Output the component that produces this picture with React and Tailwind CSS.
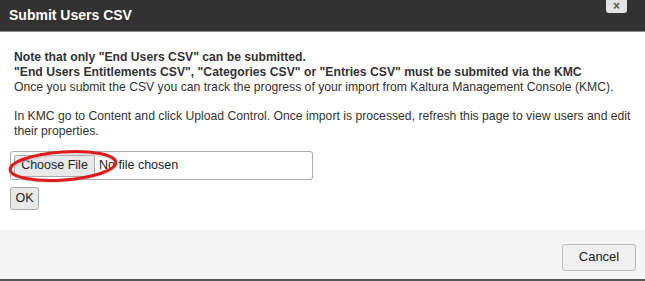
export default function App() {
    return (
        <div className="w-[645px] h-[281px] flex flex-col bg-white overflow-hidden" style={{fontFamily: "'Liberation Sans', Arial, sans-serif"}}>
            {/* Header */}
            <div className="h-[32px] shrink-0 bg-[#323232] border-b border-[#8a8a8a] flex items-center justify-between pl-[9px] pr-[18px]">
                <h1 className="text-white font-bold text-[14px] mt-[-1px]">Submit Users CSV</h1>
                <button className="self-start w-[21px] h-[13px] bg-[#e3e3e3] rounded-b-[3px] flex items-center justify-center text-[#555] text-[12px] font-bold leading-[13px] overflow-hidden">
                    ×
                </button>
            </div>

            {/* Body */}
            <div className="flex-1 px-[10px] pt-[18px] text-[12.2px] leading-[15px] text-[#333]">
                <div className="pl-[4px]">
                    <p className="font-bold">Note that only "End Users CSV" can be submitted.</p>
                    <p className="font-bold">"End Users Entitlements CSV", "Categories CSV" or "Entries CSV" must be submited via the KMC</p>
                    <p>Once you submit the CSV you can track the progress of your import from Kaltura Management Console (KMC).</p>
                    <p className="mt-[14px]">In KMC go to Content and click Upload Control. Once import is processed, refresh this page to view users and edit their properties.</p>
                </div>

                <div className="relative mt-[12px] w-[303px] h-[29px] border border-[#aaa] rounded-[3px] flex items-center pl-[3px]">
                    <span className="h-[22px] w-[81px] flex items-center justify-center bg-[#e9e9e9] border border-[#aaa] rounded-[2px] text-[#222] text-[12.5px]">Choose File</span>
                    <span className="ml-[4px] text-[#222] text-[12.5px]">No file chosen</span>
                    {/* red highlight ring */}
                    <svg className="absolute left-[-7px] top-[-3px]" width="122" height="38" viewBox="0 0 122 38">
                        <ellipse cx="59" cy="19" rx="53" ry="13.5" fill="none" stroke="#c8c8c8" strokeWidth="2" transform="rotate(-4 59 19)" opacity="0.6" />
                        <ellipse cx="59" cy="17" rx="53" ry="14" fill="none" stroke="#e01b1b" strokeWidth="3" transform="rotate(-4 59 17)" />
                    </svg>
                </div>

                <button className="mt-[7px] h-[23px] w-[29px] bg-[#e9e9e9] border border-[#aaa] rounded-[3px] text-[12.5px] text-[#222]">OK</button>
            </div>

            {/* Footer */}
            <div className="h-[51px] shrink-0 bg-[#f5f5f5] border-b-2 border-[#555] flex items-center justify-end pr-[9px]">
                <button className="w-[74px] h-[27px] mt-[5px] bg-[#f0f0f0] border border-[#bbb] rounded-[3px] text-[13px] text-[#222]">Cancel</button>
            </div>
        </div>
    );
}
